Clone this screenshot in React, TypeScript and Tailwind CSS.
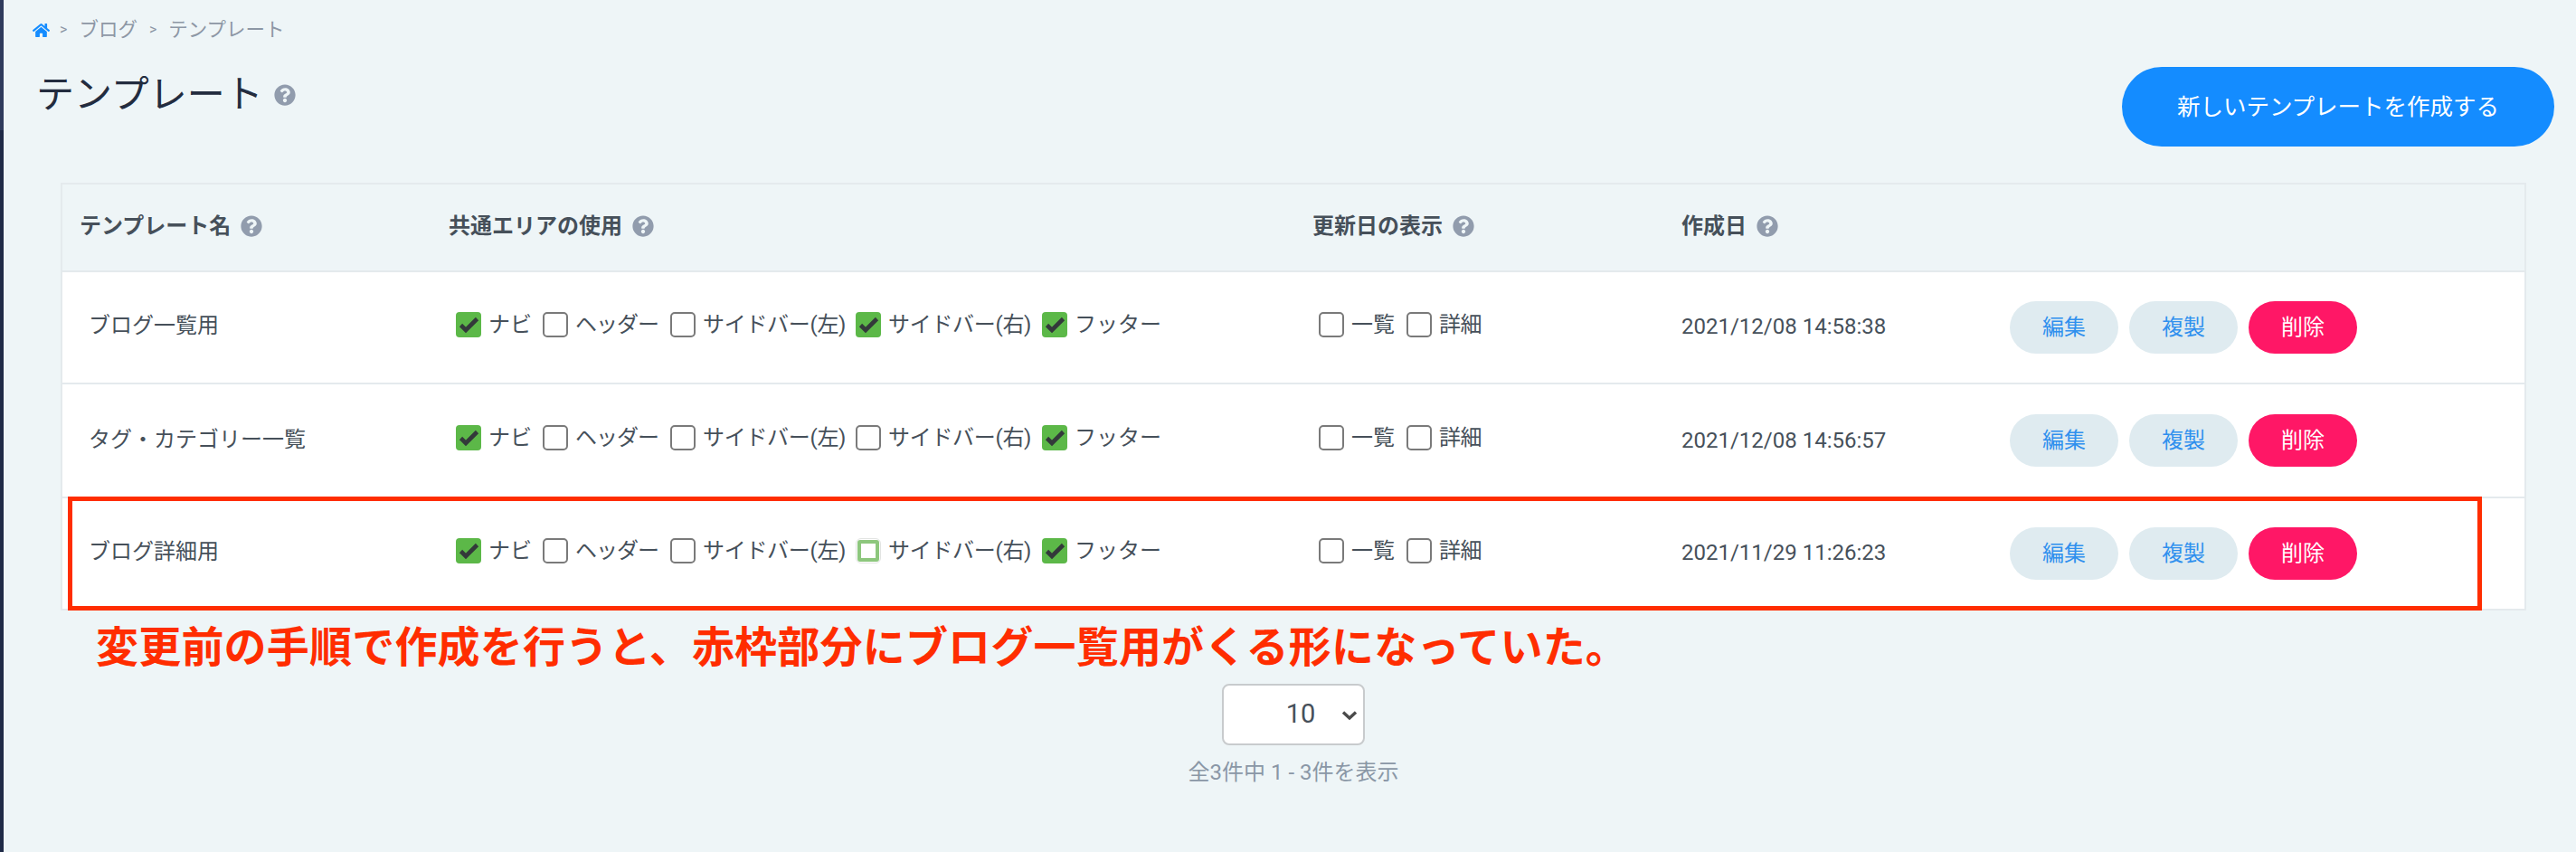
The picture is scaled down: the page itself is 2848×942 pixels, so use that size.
import React from "react";
import { FaHome, FaQuestionCircle } from "react-icons/fa";

const JP = "font-['Roboto','Noto_Sans_CJK_JP',sans-serif]";

function Help({ size = 24 }: { size?: number }) {
  return <FaQuestionCircle className="text-[#919cad] shrink-0" style={{ width: size, height: size }} />;
}

function Box({ checked, focus }: { checked?: boolean; focus?: boolean }) {
  if (checked) {
    return (
      <span className="w-[28px] h-[28px] rounded-[4px] bg-[#5cb848] shrink-0">
        <svg viewBox="0 0 28 28" className="w-[28px] h-[28px]">
          <path d="M5.5 14.5 L11 20 L23.5 7.5" fill="none" stroke="#33393a" strokeWidth="4.6" />
        </svg>
      </span>
    );
  }
  if (focus) {
    return (
      <span className="w-[28px] h-[28px] rounded-[6px] border border-[#e2e4e2] flex items-center justify-center shrink-0">
        <span className="w-[24px] h-[24px] rounded-[3px] border-[4px] border-[#8dc77d] bg-white" />
      </span>
    );
  }
  return <span className="w-[28px] h-[28px] rounded-[5px] border-2 border-[#7a7a7a] bg-white shrink-0" />;
}

function Check({ label, checked, focus, w, tight }: { label: string; checked?: boolean; focus?: boolean; w: string; tight?: string }) {
  return (
    <span className={"flex items-center gap-[8px] shrink-0 " + w}>
      <Box checked={checked} focus={focus} />
      <span className={"text-[24px] text-[#46505a] whitespace-nowrap " + (tight ?? "")}>{label}</span>
    </span>
  );
}

function Btn({ label, danger }: { label: string; danger?: boolean }) {
  return (
    <button
      className={
        "w-[120px] h-[58px] rounded-[29px] text-[24px] flex items-center justify-center " +
        (danger ? "bg-[#ff1766] text-white" : "bg-[#dfebf0] text-[#2f90ee]")
      }
    >
      {label}
    </button>
  );
}

function Row({
  name,
  right,
  date,
  focus,
  boxed,
  h,
  low,
}: {
  name: string;
  right: boolean;
  date: string;
  focus?: boolean;
  boxed?: boolean;
  h: string;
  low?: boolean;
}) {
  return (
    <div className={"relative grid grid-cols-[408px_955px_408px_362px_1fr] items-center bg-white border-b-2 border-[#e4eaed] " + h}>
      <div className={"pl-[29px] text-[24px] text-[#46505a] " + (low ? "pb-[3px]" : "pb-[5px]")}>{name}</div>
      <div className="pl-[27px] pb-[6px] flex items-center">
        <Check label="ナビ" checked w="w-[96px]" />
        <Check label="ヘッダー" w="w-[141px]" tight="tracking-[-1px]" />
        <Check label="サイドバー(左)" w="w-[205px]" tight="tracking-[-0.3px]" />
        <Check label="サイドバー(右)" checked={right} focus={focus} w="w-[206px]" tight="tracking-[-0.3px]" />
        <Check label="フッター" checked w="w-[140px]" />
      </div>
      <div className="pl-[26px] pb-[6px] flex items-center">
        <Check label="一覧" w="w-[97px]" />
        <Check label="詳細" w="w-[90px]" tight="tracking-[-0.5px]" />
      </div>
      <div className={"pl-[19px] text-[24px] text-[#46505a] " + (low ? "pb-[1px]" : "pb-[3px]")}>{date}</div>
      <div className="pl-[20px] flex items-center gap-[12px]">
        <Btn label="編集" />
        <Btn label="複製" />
        <Btn label="削除" danger />
      </div>
      {boxed && <div className="absolute left-[6px] right-[47px] top-[-2px] bottom-[-2px] border-[5px] border-[#ff2d00] pointer-events-none" />}
    </div>
  );
}

export default function App() {
  return (
    <div className={"w-[2848px] h-[942px] flex overflow-hidden bg-[#eef5f7] " + JP}>
      <div className="w-[4px] flex flex-col shrink-0">
        <div className="h-[144px] bg-[#2f3b5c]" />
        <div className="flex-1 bg-[#1f2a47]" />
      </div>
      <div className="flex-1 min-w-0 flex flex-col">
        <div className="flex items-center h-[24px] mt-[21px] ml-[32px] text-[21.5px] text-[#8d97a5]">
          <FaHome className="w-[19px] h-[19px] text-[#148cff]" />
          <span className="ml-[11px] text-[16px]">&gt;</span>
          <span className="ml-[13px]">ブログ</span>
          <span className="ml-[13px] text-[16px]">&gt;</span>
          <span className="ml-[13px]">テンプレート</span>
        </div>
        <div className="flex items-start justify-between mt-[29px] mr-[24px]">
          <div className="flex items-center ml-[36px] mt-[7px] gap-[12px]">
            <h1 className="text-[42px] leading-[48px] font-normal text-[#232c3f]">テンプレート</h1>
            <Help />
          </div>
          <button className="w-[478px] h-[88px] rounded-[44px] bg-[#148cff] text-white text-[25.5px] flex items-center justify-center">
            新しいテンプレートを作成する
          </button>
        </div>
        <div className="mt-[40px] ml-[63px] w-[2726px] border-x-2 border-t-2 border-[#e4eaed]">
          <div className="grid grid-cols-[408px_955px_408px_362px_1fr] items-center h-[97px] border-b-2 border-[#e4eaed] text-[24px] font-bold text-[#46505a]">
            <div className="pl-[19px] pb-[3px] flex items-center gap-[11px]">テンプレート名<Help /></div>
            <div className="pl-[19px] pb-[3px] flex items-center gap-[11px]">共通エリアの使用<Help /></div>
            <div className="pl-[19px] pb-[3px] flex items-center gap-[11px]">更新日の表示<Help /></div>
            <div className="pl-[19px] pb-[3px] flex items-center gap-[11px]">作成日<Help /></div>
            <div />
          </div>
          <Row name="ブログ一覧用" right date="2021/12/08 14:58:38" h="h-[124px]" />
          <Row name="タグ・カテゴリー一覧" right={false} low date="2021/12/08 14:56:57" h="h-[126px]" />
          <Row name="ブログ詳細用" right={false} focus boxed date="2021/11/29 11:26:23" h="h-[124px]" />
        </div>
        <div className="ml-[102px] mt-[11px] text-[47px] tracking-[0.2px] leading-[60px] font-bold text-[#ff2d00] whitespace-nowrap">
          変更前の手順で作成を行うと、赤枠部分にブログ一覧用がくる形になっていた。
        </div>
        <div className="w-[2726px] ml-[63px] flex flex-col items-center mt-[10px]">
          <div className="relative w-[158px] h-[68px]">
            <select
              defaultValue="10"
              className="appearance-none w-full h-full pl-[16px] rounded-[8px] border-2 border-[#c8cbcd] bg-white text-[29px] text-[#46505a] text-center"
            >
              <option>10</option>
            </select>
            <svg viewBox="0 0 18 12" className="absolute right-[8px] top-[29px] w-[18px] h-[12px]">
              <path d="M2 2.5 L9 9 L16 2.5" fill="none" stroke="#4a4a4a" strokeWidth="3.4" />
            </svg>
          </div>
          <div className="mt-[15px] text-[24px] leading-[30px] text-[#8a97a6]">全3件中 1 - 3件を表示</div>
        </div>
      </div>
    </div>
  );
}
